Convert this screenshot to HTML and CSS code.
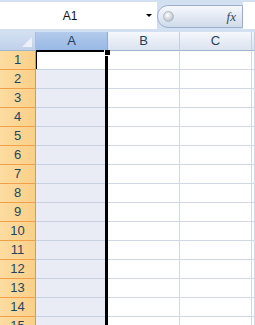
FILE: index.html
```html
<!DOCTYPE html>
<html lang="en">
<head>
    <meta charset="UTF-8">
    <title>Sheet</title>
    <link rel="stylesheet" href="styles.css">
</head>
<body>
    <div class="bar">
        <div class="namebox"><span class="ref">A1</span><span class="arrow"></span></div>
        <div class="fxpill"><span class="knob"></span><i class="fx">fx</i></div>
        <div class="input"></div>
    </div>

    <div class="sheet">
        <div class="corner"><span class="tri"></span></div>
        <div class="colhead sel">A</div>
        <div class="colhead">B</div>
        <div class="colhead">C</div>
        <div class="colhead"></div>

        <div class="rowhead">1</div><div class="cell a first"></div><div class="cell"></div><div class="cell"></div><div class="cell"></div>
        <div class="rowhead">2</div><div class="cell a"></div><div class="cell"></div><div class="cell"></div><div class="cell"></div>
        <div class="rowhead">3</div><div class="cell a"></div><div class="cell"></div><div class="cell"></div><div class="cell"></div>
        <div class="rowhead">4</div><div class="cell a"></div><div class="cell"></div><div class="cell"></div><div class="cell"></div>
        <div class="rowhead">5</div><div class="cell a"></div><div class="cell"></div><div class="cell"></div><div class="cell"></div>
        <div class="rowhead">6</div><div class="cell a"></div><div class="cell"></div><div class="cell"></div><div class="cell"></div>
        <div class="rowhead">7</div><div class="cell a"></div><div class="cell"></div><div class="cell"></div><div class="cell"></div>
        <div class="rowhead">8</div><div class="cell a"></div><div class="cell"></div><div class="cell"></div><div class="cell"></div>
        <div class="rowhead">9</div><div class="cell a"></div><div class="cell"></div><div class="cell"></div><div class="cell"></div>
        <div class="rowhead">10</div><div class="cell a"></div><div class="cell"></div><div class="cell"></div><div class="cell"></div>
        <div class="rowhead">11</div><div class="cell a"></div><div class="cell"></div><div class="cell"></div><div class="cell"></div>
        <div class="rowhead">12</div><div class="cell a"></div><div class="cell"></div><div class="cell"></div><div class="cell"></div>
        <div class="rowhead">13</div><div class="cell a"></div><div class="cell"></div><div class="cell"></div><div class="cell"></div>
        <div class="rowhead">14</div><div class="cell a"></div><div class="cell"></div><div class="cell"></div><div class="cell"></div>
        <div class="rowhead">15</div><div class="cell a"></div><div class="cell"></div><div class="cell"></div><div class="cell"></div>

        <div class="selection"></div>
        <div class="active"></div>
        <div class="handle"></div>
    </div>
</body>
</html>
```

FILE: styles.css
```css
body{
    margin:0;
    padding:0;
    width:255px;
    height:325px;
    overflow:hidden;
    background:#fff;
    font-family:"Liberation Sans", Arial, sans-serif;
}

/* formula bar */
.bar{
    display:flex;
    height:32px;
    box-sizing:border-box;
    padding:2px 0 3px 0;
    background:#d3e0f1;
}
.namebox{
    width:157px;
    background:#fff;
    display:flex;
    align-items:center;
}
.ref{
    width:140px;
    text-align:center;
    font-size:12px;
    color:#111;
}
.arrow{
    margin-left:6px;
    width:0;height:0;
    border-left:3px solid transparent;
    border-right:3px solid transparent;
    border-top:3px solid #000;
}
.fxpill{
    width:86px;
    margin:3px 0 1px 0;
    box-sizing:border-box;
    border:1px solid #9cb0cb;
    border-radius:11px 0 0 11px;
    background:linear-gradient(#f6f8fc,#e3eaf4 50%,#cfdaea);
    display:flex;
    align-items:center;
    padding-left:5px;
}
.knob{
    width:9px;height:9px;
    border-radius:50%;
    background:radial-gradient(circle at 40% 35%,#fff,#bfc6d0 70%);
    border:1px solid #b0bac8;
}
.fx{
    margin-left:auto;
    margin-right:6px;
    font-family:"Liberation Serif", serif;
    font-size:13px;
    color:#3b4656;
}
.input{
    flex:1;
    background:#fff;
}

/* grid */
.sheet{
    position:relative;
    display:grid;
    grid-template-columns:36px 72px 72px 72px 1fr;
    grid-auto-rows:19px;
    height:293px;
    overflow:hidden;
}
.sheet > div{
    box-sizing:border-box;
}
.corner{
    background:linear-gradient(#d3e0f2,#bfd1ea);
    border-right:1px solid #a9bdd8;
    border-bottom:1px solid #9eb6ce;
    position:relative;
}
.tri{
    position:absolute;
    right:3px;bottom:3px;
    width:0;height:0;
    border-left:10px solid transparent;
    border-bottom:10px solid #edf1f7;
}
.colhead{
    background:linear-gradient(#f5f8fc,#e6ecf5 55%,#dbe3ef);
    border-right:1px solid #c3cfe1;
    border-bottom:1px solid #9eb6ce;
    text-align:center;
    font-size:13px;
    line-height:18px;
    color:#24405f;
}
.colhead.sel{
    background:linear-gradient(#b3cbec,#a4c0e7 55%,#98b9e4);
    border-right-color:#8eaad0;
}
.rowhead{
    background:linear-gradient(90deg,#fddca0,#fad089);
    border-right:1px solid #f1922d;
    border-bottom:1px solid #f0a04a;
    text-align:center;
    font-size:13px;
    line-height:18px;
    color:#1d4563;
}
.cell{
    border-right:1px solid #d0d7e5;
    border-bottom:1px solid #d0d7e5;
}
.cell.a{
    background:#e9ecf5;
    border-bottom-color:#c9d0e0;
}
.cell.a.first{
    background:#fff;
}

/* selection marks sit over the cells */
.selection{
    position:absolute;
    left:36px;top:18px;
    width:72px;
    height:280px;
    box-sizing:border-box;
    border-right:3px solid #000;
}
.active{
    position:absolute;
    left:36px;top:18px;
    width:70px;height:19px;
    box-sizing:border-box;
    border-top:2px solid #000;
    border-left:1px solid #000;
}
.handle{
    position:absolute;
    left:104px;top:18px;
    width:6px;height:6px;
    background:#000;
    border:1px solid #fff;
    border-top:none;
    border-right:none;
}
```
